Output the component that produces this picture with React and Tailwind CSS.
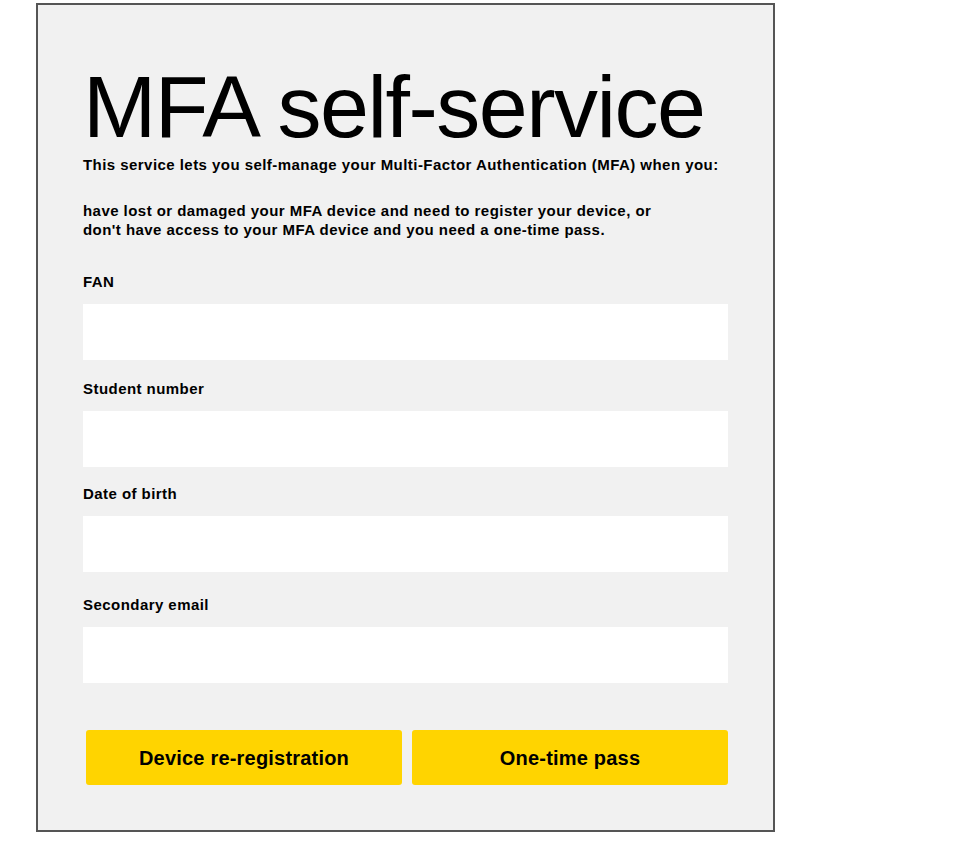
export default function App() {
  const fields = [
    { label: "FAN", mt: "mt-[33px]" },
    { label: "Student number", mt: "mt-[19px]" },
    { label: "Date of birth", mt: "mt-[17px]" },
    { label: "Secondary email", mt: "mt-[23px]" },
  ];

  return (
    <div className="w-[971px] h-[863px] bg-white pt-[3px] pl-[36px] font-['Liberation_Sans',Arial,sans-serif] text-black">
      <div className="w-[739px] h-[829px] border-2 border-[#555555] bg-[#f1f1f1] px-[45px] pt-[58px]">
        <h1 className="text-[88px] leading-none tracking-[-1.5px] font-normal">
          MFA self-service
        </h1>

        <div className="mt-[4px] text-[15px] leading-[19px] font-bold tracking-[0.45px]">
          <p>This service lets you self-manage your Multi-Factor Authentication (MFA) when you:</p>
          <p className="mt-[27px]">
            have lost or damaged your MFA device and need to register your device, or
            <br />
            don't have access to your MFA device and you need a one-time pass.
          </p>
        </div>

        {fields.map((f) => (
          <div key={f.label} className={f.mt}>
            <label className="block text-[15px] leading-[19px] font-bold tracking-[0.45px]">{f.label}</label>
            <input className="mt-[13px] block w-full h-[56px] bg-white outline-none px-3" />
          </div>
        ))}

        <div className="mt-[47px] pl-[3px] flex gap-[10px]">
          <button className="w-[316px] h-[55px] rounded-[3px] bg-[#ffd400] text-[20px] font-bold tracking-[0.2px]">
            Device re-registration
          </button>
          <button className="w-[316px] h-[55px] rounded-[3px] bg-[#ffd400] text-[20px] font-bold tracking-[0.2px]">
            One-time pass
          </button>
        </div>
      </div>
    </div>
  );
}
